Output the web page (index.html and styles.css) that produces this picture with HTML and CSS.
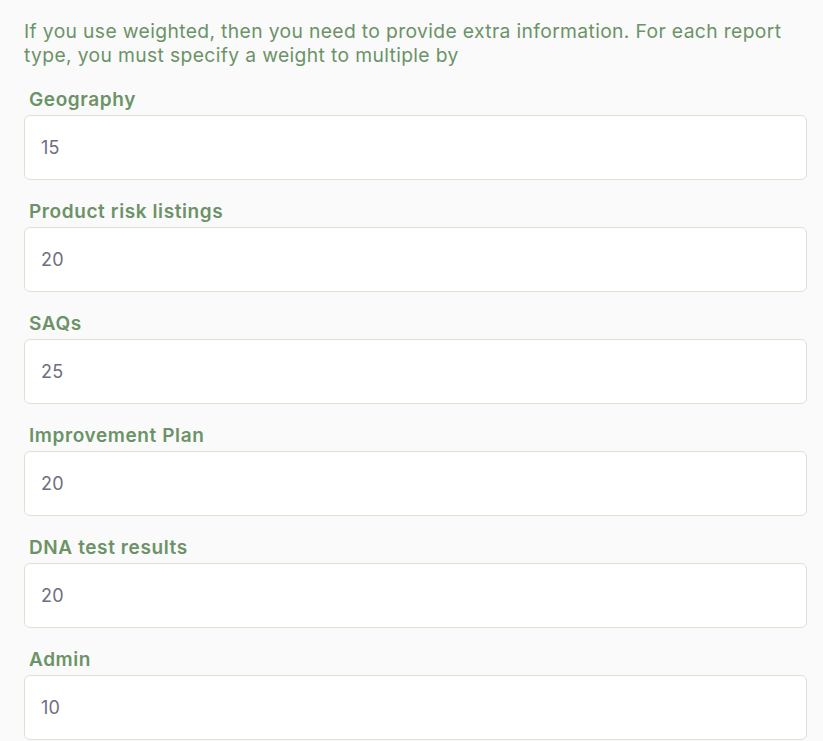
FILE: index.html
```html
<!DOCTYPE html>
<html>
<head>
	<meta charset="UTF-8">
	<link rel="stylesheet" href="styles.css">
</head>
<body>
	<div class="weights">
		<p class="intro">If you use weighted, then you need to provide extra information. For each report type, you must specify a weight to multiple by</p>

		<label class="field">
			<span class="name">Geography</span>
			<input type="text" class="inp" value="15">
		</label>
		<label class="field">
			<span class="name">Product risk listings</span>
			<input type="text" class="inp" value="20">
		</label>
		<label class="field">
			<span class="name">SAQs</span>
			<input type="text" class="inp" value="25">
		</label>
		<label class="field">
			<span class="name">Improvement Plan</span>
			<input type="text" class="inp" value="20">
		</label>
		<label class="field">
			<span class="name">DNA test results</span>
			<input type="text" class="inp" value="20">
		</label>
		<label class="field">
			<span class="name">Admin</span>
			<input type="text" class="inp" value="10">
		</label>
	</div>
</body>
</html>
```

FILE: styles.css
```css
* {
	margin: 0;
	padding: 0;
	box-sizing: border-box;
}
body {
	background: #fafafa;
	font-family: Inter, "Liberation Sans", sans-serif;
}
.weights {
	padding: 19px 16px 0 24px;
	display: flex;
	flex-direction: column;
}
.intro {
	padding-right: 20px;
	font-size: 19.3px;
	line-height: 24px;
	letter-spacing: 0.36px;
	color: #6b9367;
}
.field {
	display: flex;
	flex-direction: column;
	margin-top: 20px;
}
.field + .field {
	margin-top: 19px;
}
.name {
	display: block;
	padding: 1px 0 0 5px;
	font-size: 19px;
	font-weight: 600;
	line-height: 24px;
	letter-spacing: 0.6px;
	color: #6b9367;
	margin-bottom: 3px;
}
.inp {
	display: block;
	width: 100%;
	height: 65px;
	border: 1px solid #d6e5d2;
	border-radius: 6px;
	background: #fff;
	outline: none;
	padding-left: 16px;
	font: 400 18px Inter, "Liberation Sans", sans-serif;
	letter-spacing: 0.3px;
	color: #6e6e7e;
}
```
